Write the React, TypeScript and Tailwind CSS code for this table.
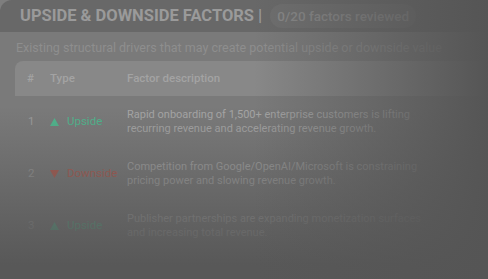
const rows = [
  {
    n: 1,
    up: true,
    text: "Rapid onboarding of 1,500+ enterprise customers is lifting recurring revenue and accelerating revenue growth.",
  },
  {
    n: 2,
    up: false,
    text: "Competition from Google/OpenAI/Microsoft is constraining pricing power and slowing revenue growth.",
  },
  {
    n: 3,
    up: true,
    text: "Publisher partnerships are expanding monetization surfaces and increasing total revenue.",
  },
];

export default function App() {
  return (
    <div
      className="relative h-[279px] w-[488px] overflow-hidden bg-[#7e7e7e]"
      style={{ fontFamily: "Roboto, 'Noto Sans', sans-serif" }}
    >
      <div className="h-full w-[620px] overflow-hidden rounded-tl-[12px] bg-[#7a7a7a]">
        <div className="flex h-[32px] items-center gap-[8px] bg-[#686868] pl-[20px]">
          <h2 className="whitespace-nowrap text-[16.5px] font-bold text-[#9a9a9a]">
            UPSIDE &amp; DOWNSIDE FACTORS |
          </h2>
          <span className="whitespace-nowrap rounded-full bg-[#6e6e6e] px-[7px] py-[2px] text-[13.5px] font-medium text-[#888888]">
            0/20 factors reviewed
          </span>
        </div>

        <p className="whitespace-nowrap pl-[16px] pt-[8px] text-[12.5px] leading-[16px] text-[#8e8e8e]">
          Existing structural drivers that may create potential upside or downside value
        </p>

        <div className="ml-[15px] mt-[5px]">
          <div className="flex h-[35px] items-center rounded-t-[8px] bg-[#888888] text-[11.5px] font-medium text-[#a3a3a3]">
            <span className="w-[35px] pl-[12px]">#</span>
            <span className="w-[77px]">Type</span>
            <span>Factor description</span>
          </div>
          {rows.map((r) => (
            <div key={r.n} className="flex h-[52px] items-center text-[11.5px]">
              <span className="w-[35px] pl-[13px] text-[#9c9c9c]">{r.n}</span>
              <span
                className={`flex w-[77px] items-center gap-[8px] ${
                  r.up ? "text-[#4fb78e]" : "text-[#b4574b]"
                }`}
              >
                <svg width="9" height="8" viewBox="0 0 9 8">
                  {r.up ? (
                    <path d="M4.5 0 L9 8 H0 Z" fill="currentColor" />
                  ) : (
                    <path d="M0 0 H9 L4.5 8 Z" fill="currentColor" />
                  )}
                </svg>
                {r.up ? "Upside" : "Downside"}
              </span>
              <span className="w-[300px] text-[11px] leading-[14px] text-[#a7a7a7]">{r.text}</span>
            </div>
          ))}
        </div>
      </div>

      <div className="pointer-events-none absolute inset-0 bg-[linear-gradient(to_bottom,transparent_38%,#585858_95%)]" />
      <div className="pointer-events-none absolute inset-0 bg-[linear-gradient(to_right,transparent_52%,#555555_100%)]" />
    </div>
  );
}
